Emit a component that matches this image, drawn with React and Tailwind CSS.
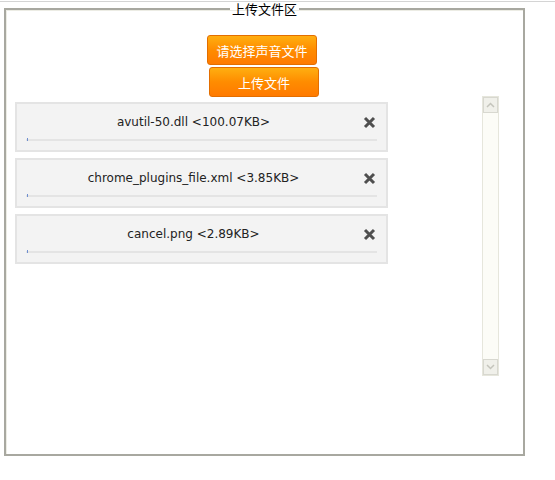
import React from "react";

const files = [
  { name: "avutil-50.dll", size: "100.07KB" },
  { name: "chrome_plugins_file.xml", size: "3.85KB" },
  { name: "cancel.png", size: "2.89KB" },
];

const cjk = "font-['SimSun','Noto_Sans_CJK_SC',sans-serif]";

function CloseIcon() {
  return (
    <svg width="13" height="13" viewBox="0 0 13 13" className="shrink-0">
      <path d="M2 2 L11 11 M11 2 L2 11" stroke="#4f4f4f" strokeWidth="3" />
    </svg>
  );
}

function FileRow({ file }) {
  return (
    <div className="w-[373px] h-[50px] border-2 border-[#e4e4e4] bg-[#f3f3f3] px-[9px] pt-[10px]">
      <div className="relative flex items-center justify-center h-[16px] pr-[16px]">
        <span className="text-[12px] text-[#222] font-['DejaVu_Sans',sans-serif] leading-[16px]">
          {file.name} &lt;{file.size}&gt;
        </span>
        <span className="absolute right-[1px] top-[2px]">
          <CloseIcon />
        </span>
      </div>
      <div className="mt-[9px] h-[2px] bg-[#e4e4e4] relative">
        <div className="absolute left-[1px] top-[-1px] w-px h-[3px] bg-[#6f8fd0]" />
      </div>
    </div>
  );
}

function OrangeButton({ children, className = "" }) {
  return (
    <button
      className={`w-[110px] h-[30px] rounded-[3px] border border-[#e36e00] bg-gradient-to-b from-[#ffae10] via-[#ff8c00] to-[#ff7a00] text-white text-[13px] leading-none ${cjk} ${className}`}
    >
      {children}
    </button>
  );
}

function Scrollbar() {
  return (
    <div className="ml-[94px] w-[17px] h-[280px] border border-[#e6e6dc] bg-[#fcfcf7] flex flex-col justify-between">
      <div className="h-[16px] border border-[#d8d8d0] bg-[#f0f0ea] flex items-center justify-center">
        <svg width="9" height="6" viewBox="0 0 9 6">
          <path d="M1 5 L4.5 1.5 L8 5" stroke="#c4c4bc" strokeWidth="1.5" fill="none" />
        </svg>
      </div>
      <div className="h-[16px] border border-[#d8d8d0] bg-[#f0f0ea] flex items-center justify-center">
        <svg width="9" height="6" viewBox="0 0 9 6">
          <path d="M1 1 L4.5 4.5 L8 1" stroke="#c4c4bc" strokeWidth="1.5" fill="none" />
        </svg>
      </div>
    </div>
  );
}

export default function App() {
  return (
    <div className="w-[555px] h-[480px] bg-white pt-px">
      <div className="h-px bg-[#d4d4d4]" />
      <fieldset className="ml-[4px] w-[521px] h-[454px] border-2 border-[#a8a8a0] shadow-[inset_1px_1px_0_#ececE4] px-[9px] pt-[19px]">
        <legend className={`mx-auto px-[2px] text-[13px] leading-[14px] text-black ${cjk}`}>
          上传文件区
        </legend>
        <div className="flex flex-col items-center gap-[2px] pr-[5px]">
          <OrangeButton>请选择声音文件</OrangeButton>
          <OrangeButton className="ml-[4px]">上传文件</OrangeButton>
        </div>
        <div className="flex items-start -mt-px">
          <div className="flex flex-col gap-[6px] pt-[6px]">
            {files.map((f) => (
              <FileRow key={f.name} file={f} />
            ))}
          </div>
          <Scrollbar />
        </div>
      </fieldset>
    </div>
  );
}
